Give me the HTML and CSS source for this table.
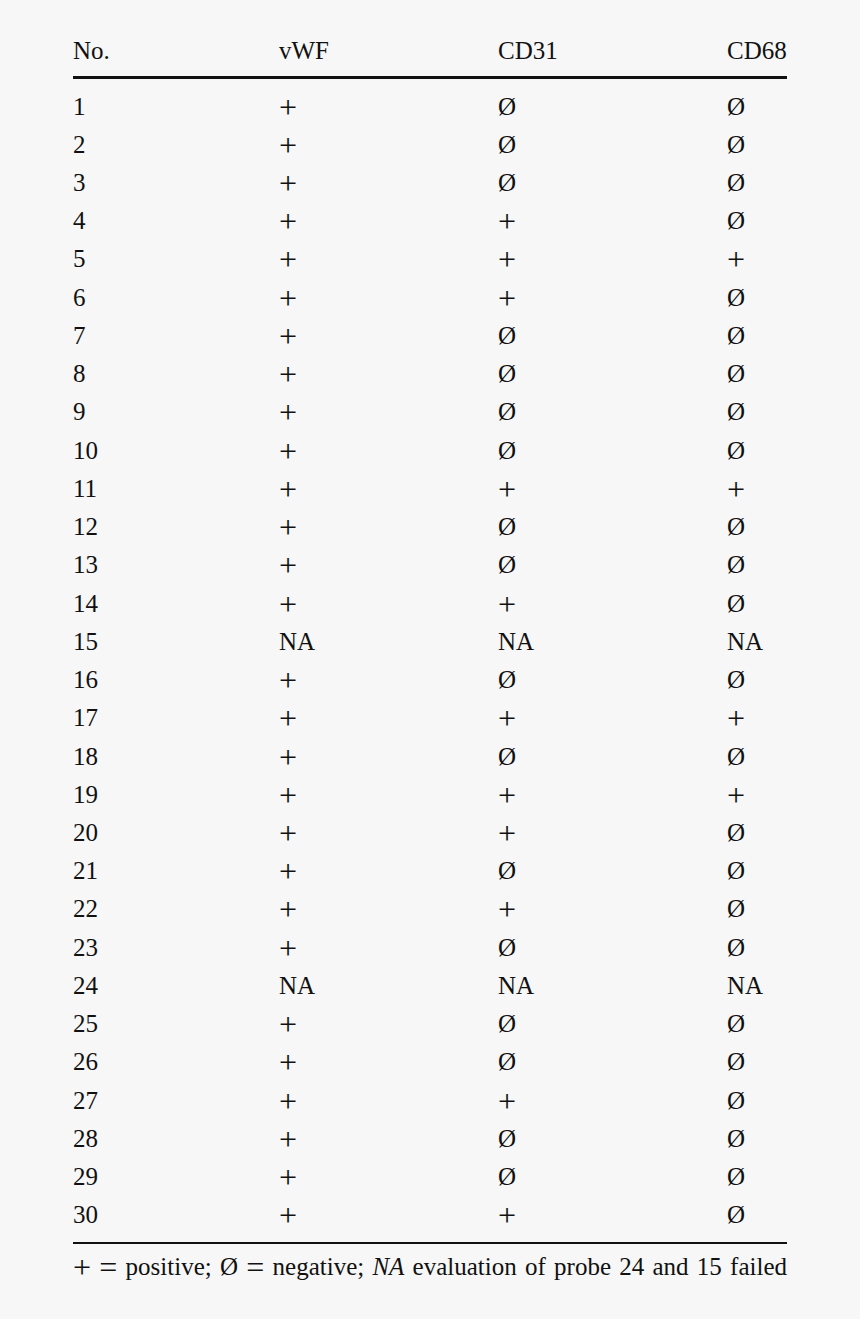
FILE: index.html
```html
<!DOCTYPE html>
<html>
<head>
<meta charset="utf-8">
<link rel="stylesheet" href="styles.css">
</head>
<body>
<div class="table">
  <div class="row head"><span>No.</span><span>vWF</span><span>CD31</span><span>CD68</span></div>
  <div class="rule thick"></div>
  <div class="body">
    <div class="row"><span>1</span><span><b class="p">+</b></span><span>Ø</span><span>Ø</span></div>
    <div class="row"><span>2</span><span><b class="p">+</b></span><span>Ø</span><span>Ø</span></div>
    <div class="row"><span>3</span><span><b class="p">+</b></span><span>Ø</span><span>Ø</span></div>
    <div class="row"><span>4</span><span><b class="p">+</b></span><span><b class="p">+</b></span><span>Ø</span></div>
    <div class="row"><span>5</span><span><b class="p">+</b></span><span><b class="p">+</b></span><span><b class="p">+</b></span></div>
    <div class="row"><span>6</span><span><b class="p">+</b></span><span><b class="p">+</b></span><span>Ø</span></div>
    <div class="row"><span>7</span><span><b class="p">+</b></span><span>Ø</span><span>Ø</span></div>
    <div class="row"><span>8</span><span><b class="p">+</b></span><span>Ø</span><span>Ø</span></div>
    <div class="row"><span>9</span><span><b class="p">+</b></span><span>Ø</span><span>Ø</span></div>
    <div class="row"><span>10</span><span><b class="p">+</b></span><span>Ø</span><span>Ø</span></div>
    <div class="row"><span>11</span><span><b class="p">+</b></span><span><b class="p">+</b></span><span><b class="p">+</b></span></div>
    <div class="row"><span>12</span><span><b class="p">+</b></span><span>Ø</span><span>Ø</span></div>
    <div class="row"><span>13</span><span><b class="p">+</b></span><span>Ø</span><span>Ø</span></div>
    <div class="row"><span>14</span><span><b class="p">+</b></span><span><b class="p">+</b></span><span>Ø</span></div>
    <div class="row"><span>15</span><span>NA</span><span>NA</span><span>NA</span></div>
    <div class="row"><span>16</span><span><b class="p">+</b></span><span>Ø</span><span>Ø</span></div>
    <div class="row"><span>17</span><span><b class="p">+</b></span><span><b class="p">+</b></span><span><b class="p">+</b></span></div>
    <div class="row"><span>18</span><span><b class="p">+</b></span><span>Ø</span><span>Ø</span></div>
    <div class="row"><span>19</span><span><b class="p">+</b></span><span><b class="p">+</b></span><span><b class="p">+</b></span></div>
    <div class="row"><span>20</span><span><b class="p">+</b></span><span><b class="p">+</b></span><span>Ø</span></div>
    <div class="row"><span>21</span><span><b class="p">+</b></span><span>Ø</span><span>Ø</span></div>
    <div class="row"><span>22</span><span><b class="p">+</b></span><span><b class="p">+</b></span><span>Ø</span></div>
    <div class="row"><span>23</span><span><b class="p">+</b></span><span>Ø</span><span>Ø</span></div>
    <div class="row"><span>24</span><span>NA</span><span>NA</span><span>NA</span></div>
    <div class="row"><span>25</span><span><b class="p">+</b></span><span>Ø</span><span>Ø</span></div>
    <div class="row"><span>26</span><span><b class="p">+</b></span><span>Ø</span><span>Ø</span></div>
    <div class="row"><span>27</span><span><b class="p">+</b></span><span><b class="p">+</b></span><span>Ø</span></div>
    <div class="row"><span>28</span><span><b class="p">+</b></span><span>Ø</span><span>Ø</span></div>
    <div class="row"><span>29</span><span><b class="p">+</b></span><span>Ø</span><span>Ø</span></div>
    <div class="row"><span>30</span><span><b class="p">+</b></span><span><b class="p">+</b></span><span>Ø</span></div>
  </div>
  <div class="rule thin"></div>
  <p class="note"><b class="p">+</b> <b class="p">=</b> positive; Ø <b class="p">=</b> negative; <i>NA</i> evaluation of probe 24 and 15 failed</p>
</div>
</body>
</html>
```
FILE: styles.css
```css
html, body {
  margin: 0;
  padding: 0;
  background: #f7f7f7;
}
body {
  font-family: "Liberation Serif", "Times New Roman", serif;
  font-size: 25px;
  color: #111;
}
.table {
  width: 714px;
  margin-left: 73px;
  padding-top: 31.5px;
}
.row {
  display: grid;
  grid-template-columns: 206px 219px 229px 60px;
  line-height: 38.24px;
  height: 38.24px;
  white-space: nowrap;
}
.p {
  font-weight: normal;
  font-size: 32px;
  line-height: 0;
  vertical-align: -3px;
}
.head {
  margin-bottom: 6.3px;
}
.rule {
  background: #111;
}
.thick {
  height: 3px;
}
.thin {
  height: 2px;
}
.body {
  padding-top: 8.5px;
  padding-bottom: 7.3px;
}
.note {
  margin: 0;
  padding-top: 4.5px;
  line-height: 38.24px;
  white-space: nowrap;
  text-align: justify;
  text-align-last: justify;
}
.note i {
  font-style: italic;
}
```
